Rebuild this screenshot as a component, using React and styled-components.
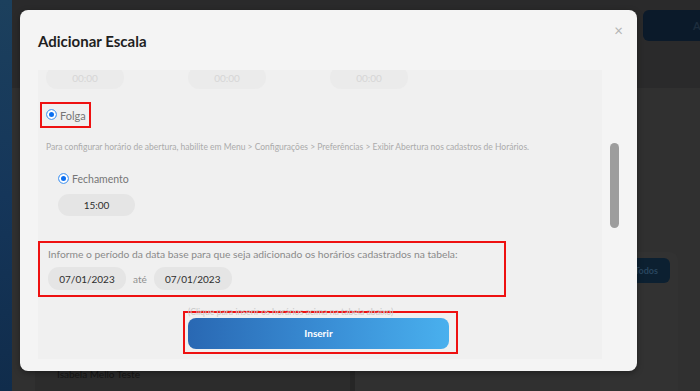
import React from 'react';
import styled, { createGlobalStyle } from 'styled-components';

const GlobalStyle = createGlobalStyle`
  * { box-sizing: border-box; margin: 0; padding: 0; }
  html, body { width: 700px; height: 391px; overflow: hidden; }
  body { background: #2c2c2d; font-family: Lato, "Open Sans", sans-serif; }
`;

const Screen = styled.div`
  position: relative;
  display: flex;
  width: 700px;
  height: 391px;
  overflow: hidden;
`;

const Sidebar = styled.div`
  width: 12px;
  flex-shrink: 0;
  background: linear-gradient(180deg, #1c405d 0%, #15365a 50%, #102c4b 100%);
`;

const Main = styled.div`
  flex: 1;
  display: flex;
  flex-direction: column;
  background: #2a2a2a;
`;

const TopBar = styled.div`
  height: 88px;
  display: flex;
  justify-content: flex-end;
  align-items: flex-start;
  padding-top: 10px;
  background: #2a2a2b;
`;

const TopButton = styled.div`
  width: 80px;
  height: 31px;
  margin-right: -23px;
  border-radius: 6px;
  background: #0b1a2a;
  color: #1d2d3d;
  font-size: 11px;
  font-weight: 700;
  display: flex;
  align-items: center;
  padding-left: 50px;
`;

const Workspace = styled.div`
  flex: 1;
  display: flex;
  background: #303030;
  padding-left: 23px;
`;

const LeftPanel = styled.div`
  width: 320px;
  display: flex;
  flex-direction: column;
  justify-content: flex-end;
  padding: 0 0 11px 22px;
  background: #2c2c2c;
  border-right: 5px solid #262626;
`;

const RowName = styled.div`
  font-size: 10px;
  color: #151515;
`;

const RightPanel = styled.div`
  flex: 1;
  display: flex;
  align-items: flex-start;
  justify-content: flex-end;
  padding-top: 164px;
`;

const PanelCard = styled.div`
  height: 100%;
  padding: 6px 8px 0 0;
  background: #323232;
  border-top-right-radius: 8px;
  margin-right: 22px;
`;

const TodosButton = styled.div`
  width: 70px;
  height: 25px;
  border-radius: 6px;
  background: #0c2031;
  color: #29465f;
  font-size: 9px;
  font-weight: 700;
  display: flex;
  align-items: center;
  justify-content: flex-end;
  padding-right: 12px;
`;

const Modal = styled.div`
  position: absolute;
  left: 20px;
  top: 10px;
  width: 617px;
  height: 361px;
  border-radius: 8px;
  background: #f4f4f4;
  display: flex;
  flex-direction: column;
  box-shadow: 0 2px 6px rgba(0, 0, 0, 0.35);
`;

const Header = styled.div`
  height: 60px;
  display: flex;
  align-items: center;
  justify-content: space-between;
  padding: 0 14px 0 18px;
`;

const Title = styled.h2`
  font-size: 15px;
  font-weight: 700;
  color: #1f1f1f;
  margin-top: 2px;
`;

const Close = styled.span`
  font-size: 15px;
  color: #b3b3b3;
  margin-top: -20px;
  line-height: 1;
`;

const Body = styled.div`
  flex: 1;
  display: flex;
  gap: 8px;
  padding: 0 18px 12px 18px;
`;

const Viewport = styled.div`
  flex: 1;
  height: 289px;
  overflow: hidden;
  background: #f0f0f0;
`;

const Track = styled.div`
  width: 9px;
`;

const Thumb = styled.div`
  margin-top: 73px;
  height: 85px;
  border-radius: 5px;
  background: #9d9d9d;
`;

const TimeRow = styled.div`
  display: grid;
  grid-template-columns: repeat(3, 142px);
  padding-left: 8px;
  margin-top: -4px;
`;

const TimeInput = styled.div`
  width: ${p => p.$w || 78}px;
  height: ${p => p.$h || 23}px;
  border-radius: 11px;
  background: ${p => (p.$faded ? '#ebebeb' : '#e5e5e5')};
  color: ${p => (p.$faded ? '#d6d6d6' : '#2e2e2e')};
  font-size: 10px;
  display: flex;
  align-items: center;
  justify-content: center;
`;

const RadioLabel = styled.label`
  display: inline-flex;
  align-items: center;
  gap: 3px;
  font-size: ${p => p.$size || 11}px;
  color: #767676;
`;

const Highlight = styled.div`
  display: ${p => (p.$inline ? 'inline-flex' : 'block')};
  border: 2px solid #ee1111;
`;

const FolgaBox = styled(Highlight)`
  margin: 13px 0 0 2px;
  height: 26px;
  align-items: center;
  padding: 0 3px 0 4px;
`;

const Radio = styled.span`
  width: 11px;
  height: 11px;
  border-radius: 50%;
  border: 1px solid #6aaaf0;
  background: #0b6ff0;
  box-shadow: inset 0 0 0 2px #ffffff;
  flex-shrink: 0;
  margin-top: -2px;
`;

const Helper = styled.p`
  font-size: 8.5px;
  color: #ababab;
  padding-left: 8px;
  margin-top: 14px;
  white-space: nowrap;
`;

const Group = styled.div`
  padding-left: 20px;
  margin-top: 21px;
  display: flex;
  flex-direction: column;
  align-items: flex-start;
  gap: 9px;
`;

const PeriodBox = styled(Highlight)`
  margin-top: 25px;
  width: 468px;
  height: 56px;
  padding: 5px 0 0 8px;
`;

const PeriodText = styled.p`
  font-size: 10.3px;
  color: #8a8a8a;
  white-space: nowrap;
`;

const DateRow = styled.div`
  display: flex;
  align-items: center;
  gap: 7px;
  margin-top: 7px;
  font-size: 10px;
  color: #8f8f8f;
`;

const Hint = styled.p`
  font-size: 8.7px;
  color: #c9c9c9;
  margin: 11px 0 0 150px;
  line-height: 1;
  white-space: nowrap;
`;

const ButtonBox = styled(Highlight)`
  margin: -6px 0 0 145px;
  width: 275px;
  height: 43px;
  padding: 5px 7px 0 3px;
`;

const InsertButton = styled.button`
  width: 100%;
  height: 31px;
  border: none;
  border-radius: 8px;
  background: linear-gradient(90deg, #2968b3 0%, #3a8fd6 55%, #49b0ee 100%);
  color: #ffffff;
  font-family: Lato, "Open Sans", sans-serif;
  font-size: 10px;
  font-weight: 700;
`;

export default function App() {
  return (
    <>
      <GlobalStyle />
      <Screen>
        <Sidebar />
        <Main>
          <TopBar>
            <TopButton>A</TopButton>
          </TopBar>
          <Workspace>
            <LeftPanel>
              <RowName>Isabela Mello Teste</RowName>
            </LeftPanel>
            <RightPanel>
              <PanelCard>
                <TodosButton>Todos</TodosButton>
              </PanelCard>
            </RightPanel>
          </Workspace>
        </Main>

        <Modal>
          <Header>
            <Title>Adicionar Escala</Title>
            <Close>×</Close>
          </Header>
          <Body>
            <Viewport>
              <TimeRow>
                <TimeInput $faded>00:00</TimeInput>
                <TimeInput $faded>00:00</TimeInput>
                <TimeInput $faded>00:00</TimeInput>
              </TimeRow>

              <FolgaBox $inline>
                <RadioLabel>
                  <Radio />
                  Folga
                </RadioLabel>
              </FolgaBox>

              <Helper>
                Para configurar horário de abertura, habilite em Menu &gt; Configurações &gt; Preferências &gt; Exibir Abertura nos cadastros de Horários.
              </Helper>

              <Group>
                <RadioLabel $size={10.5}>
                  <Radio />
                  Fechamento
                </RadioLabel>
                <TimeInput $w={77} $h={22}>15:00</TimeInput>
              </Group>

              <PeriodBox>
                <PeriodText>
                  Informe o período da data base para que seja adicionado os horários cadastrados na tabela:
                </PeriodText>
                <DateRow>
                  <TimeInput>07/01/2023</TimeInput>
                  até
                  <TimeInput>07/01/2023</TimeInput>
                </DateRow>
              </PeriodBox>

              <Hint>(Clique para inserir os horários acima na tabela abaixo)</Hint>
              <ButtonBox>
                <InsertButton>Inserir</InsertButton>
              </ButtonBox>
            </Viewport>
            <Track>
              <Thumb />
            </Track>
          </Body>
        </Modal>
      </Screen>
    </>
  );
}
